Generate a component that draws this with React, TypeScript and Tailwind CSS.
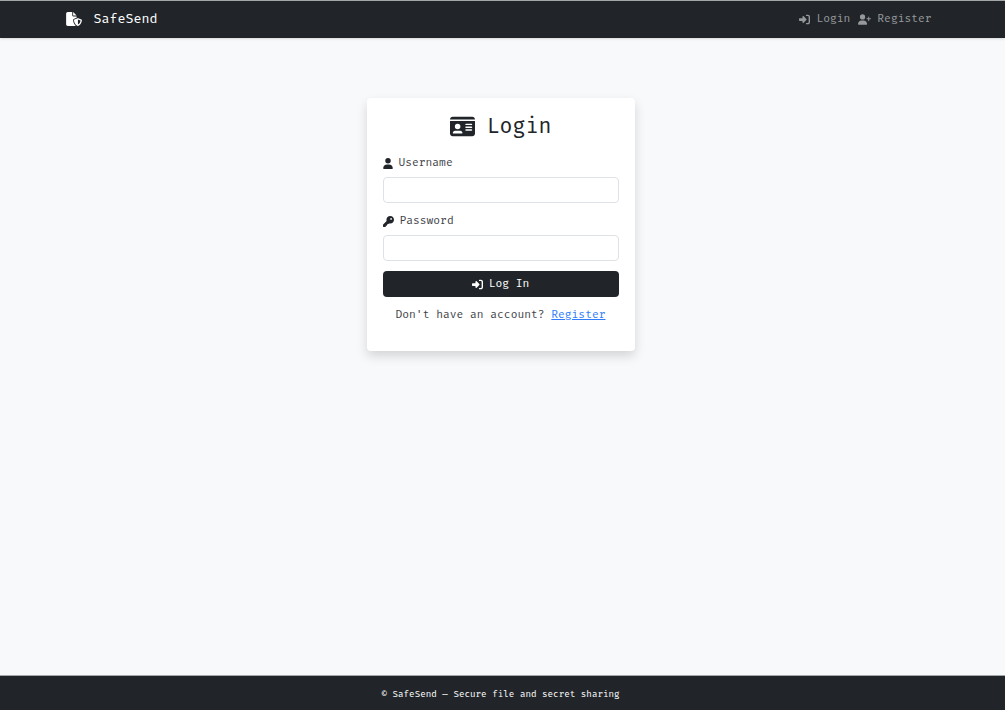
import React from 'react';
import {
  FaFileShield,
  FaIdCard,
  FaKey,
  FaRightToBracket,
  FaUser,
  FaUserPlus,
} from 'react-icons/fa6';

interface FieldProps {
  id: string;
  label: string;
  type: string;
  icon: React.ReactNode;
}

const Field: React.FC<FieldProps> = ({ id, label, type, icon }) => (
  <div className="mb-2.5">
    <label htmlFor={id} className="mb-1.5 flex items-center gap-1.5 text-[#3f4449]">
      <span className="text-[#212529]">{icon}</span>
      {label}
    </label>
    <input
      id={id}
      name={id}
      type={type}
      className="block h-[26px] w-full rounded border border-[#dee2e6] bg-white px-2 outline-none focus:border-blue-300"
    />
  </div>
);

const Navbar: React.FC = () => (
  <header className="border-t border-[#a3a8a7] bg-[#212529] pr-1 pb-px shadow-sm">
    <nav className="mx-auto flex h-9 max-w-[870px] items-center justify-between pr-1">
      <a href="#" className="flex items-center gap-3 text-[13px] text-white">
        <FaFileShield className="h-3.5 w-4" />
        SafeSend
      </a>
      <div className="flex items-center gap-2 text-[#96999b]">
        <a href="#login" className="flex items-center gap-1.5 hover:text-white">
          <FaRightToBracket className="size-[11px]" />
          Login
        </a>
        <a href="#register" className="flex items-center gap-1.5 hover:text-white">
          <FaUserPlus className="size-[13px]" />
          Register
        </a>
      </div>
    </nav>
  </header>
);

const LoginCard: React.FC = () => (
  <section className="w-full max-w-[268px] rounded bg-white p-4 pb-7 shadow-[0_5px_11px_rgba(0,0,0,0.15)]">
    <h1 className="mb-4 flex items-center justify-center gap-3 text-[21px] leading-[25px]">
      <FaIdCard className="size-[25px]" />
      Login
    </h1>
    <form onSubmit={(e) => e.preventDefault()}>
      <Field id="username" label="Username" type="text" icon={<FaUser className="h-[11px] w-2.5" />} />
      <Field id="password" label="Password" type="password" icon={<FaKey className="size-[11px]" />} />
      <button
        type="submit"
        className="flex h-[26px] w-full items-center justify-center gap-1.5 rounded bg-[#212529] text-white hover:bg-[#424649]"
      >
        <FaRightToBracket className="size-[11px]" />
        Log In
      </button>
    </form>
    <p className="mt-2.5 text-center whitespace-nowrap text-[#3f4449]">
      Don't have an account?{' '}
      <a href="#register" className="text-[#2f7dfb] underline">
        Register
      </a>
    </p>
  </section>
);

export default function App() {
  return (
    <div className="flex min-h-screen flex-col bg-[#f8f9fb] font-['Fira_Code','Liberation_Mono',monospace] text-[11px] leading-4 text-[#212529]">
      <Navbar />
      <main className="flex grow items-start justify-center px-4 pt-[60px] pr-5">
        <LoginCard />
      </main>
      <footer className="border-t border-[#a3a8a7] bg-[#212529] pt-3 pr-1 pb-2 text-center text-[9px] leading-[14px] text-white">
        © SafeSend — Secure file and secret sharing
      </footer>
    </div>
  );
}
